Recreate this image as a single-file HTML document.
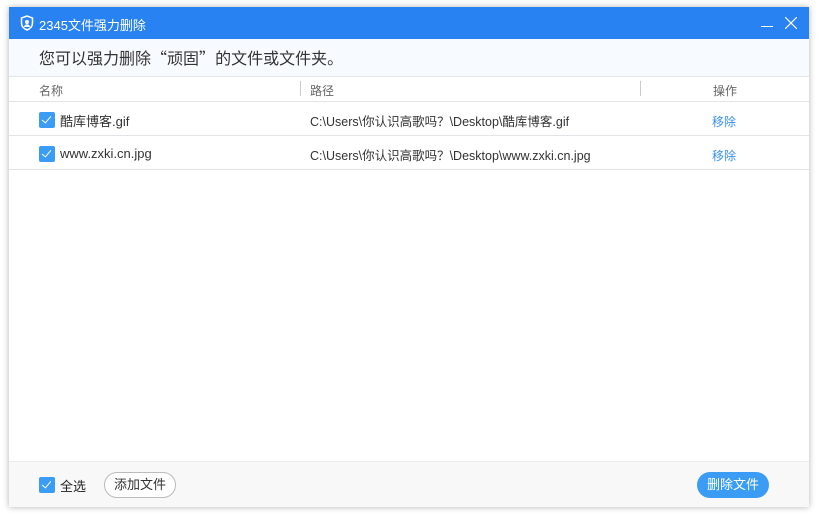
<!DOCTYPE html>
<html><head><meta charset="utf-8"><style>
*{margin:0;padding:0;box-sizing:border-box}
body{width:818px;height:518px;background:#fff;font-family:"Liberation Sans","Noto Sans CJK SC",sans-serif;position:relative;overflow:hidden}
.win{position:absolute;left:9px;top:7px;width:800px;height:500px;background:#fff;box-shadow:0 0 6px rgba(0,0,0,.3)}
.title{height:32px;background:#2882f2;color:#fff;font-size:13px;position:relative}
.title span{position:absolute;left:30px;top:8px}
.sub{height:38px;background:#f7faff;border-bottom:1px solid #e3e6ea;font-size:16px;color:#333;padding:6px 0 0 30px}
.q{font-family:"Noto Sans CJK SC",sans-serif}
.hdr{height:25px;border-bottom:1px solid #e1e4e8;font-size:12px;color:#666;position:relative}
.row{height:34px;border-bottom:1px solid #e1e4e8;font-size:13px;color:#333;position:relative}
.a{position:absolute}
.cb{position:absolute;width:16px;height:16px;background:#3a9cf5;border-radius:2px}
.cb:after{content:"";position:absolute;left:5px;top:2px;width:4px;height:8px;border:solid #fff;border-width:0 1.3px 1.3px 0;transform:rotate(40deg)}
.sep{position:absolute;top:4px;width:1px;height:15px;background:#ccc}
.foot{position:absolute;left:0;top:454px;width:800px;height:46px;background:#f8f8f8;border-top:1px solid #ececec}
</style></head><body>
<div class="win">
<div class="title">
<svg class="a" style="left:11px;top:8px" width="14" height="16" viewBox="0 0 14 16"><path d="M7 1L1.5 3v5c0 3.5 2.5 5.8 5.5 7 3-1.2 5.5-3.5 5.5-7V3z" fill="none" stroke="#fff" stroke-width="1.5"/><circle cx="7" cy="7" r="2" fill="#fff"/><path d="M3.8 12c.8-2 2-2.6 3.2-2.6s2.4.6 3.2 2.6" fill="#fff"/></svg>
<span>2345文件强力删除</span>
<div class="a" style="left:752px;top:19px;width:12px;height:1px;background:#fff"></div>
<svg class="a" style="left:776px;top:10px" width="12" height="12"><path d="M0 0L12 12M12 0L0 12" stroke="#fff" stroke-width="1.2"/></svg>
</div>
<div class="sub">您可以强力删除<span class="q">“</span>顽固<span class="q">”</span>的文件或文件夹。</div>
<div class="hdr"><span class="a" style="left:30px;top:5px">名称</span><div class="sep" style="left:291px"></div><span class="a" style="left:301px;top:5px">路径</span><div class="sep" style="left:631px"></div><span class="a" style="left:704px;top:5px">操作</span></div>
<div class="row"><div class="cb" style="left:30px;top:10px"></div><span class="a" style="left:51px;top:9px">酷库博客.gif</span><span class="a" style="left:301px;top:9px;font-size:12.5px">C:\Users\你认识高歌吗？\Desktop\酷库博客.gif</span><span class="a" style="left:703px;top:11px;font-size:12px;color:#3a8ff0">移除</span></div>
<div class="row"><div class="cb" style="left:30px;top:10px"></div><span class="a" style="left:51px;top:10px">www.zxki.cn.jpg</span><span class="a" style="left:301px;top:9px;font-size:12.5px">C:\Users\你认识高歌吗？\Desktop\www.zxki.cn.jpg</span><span class="a" style="left:703px;top:11px;font-size:12px;color:#3a8ff0">移除</span></div>
<div class="foot">
<div class="cb" style="left:30px;top:15px"></div><span class="a" style="left:51px;top:14px;font-size:13px;color:#222">全选</span>
<div class="a" style="left:95px;top:10px;width:72px;height:26px;border:1px solid #bbb;border-radius:13px;background:#fff;font-size:13px;color:#333;text-align:center;line-height:24px">添加文件</div>
<div class="a" style="left:688px;top:10px;width:72px;height:26px;border-radius:13px;background:#3a9cf5;font-size:13px;color:#fff;text-align:center;line-height:26px">删除文件</div>
</div>
</div>
</body></html>
